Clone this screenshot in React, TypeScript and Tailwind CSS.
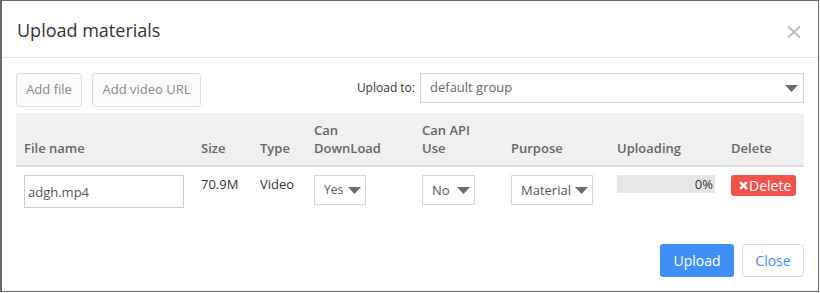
import React from "react";

const Arrow = () => (
  <svg width="13" height="7" viewBox="0 0 13 7" className="shrink-0">
    <polygon points="0,0 13,0 6.5,7" fill="#6b6b6b" />
  </svg>
);

const Sel = ({ label, w, size = "text-[13px]" }: { label: string; w: string; size?: string }) => (
  <div className={`${w} h-[30px] flex items-center justify-between border border-[#d4d4d4] bg-white pl-[9px] pr-[4px] ${size} text-[#555]`}>
    <span>{label}</span>
    <Arrow />
  </div>
);

export default function App() {
  return (
    <div
      className="w-[819px] h-[292px] flex flex-col border border-l-2 border-[#6a6a6a] bg-white text-[#333]"
      style={{ fontFamily: '"Open Sans", "Liberation Sans", sans-serif' }}
    >
      <div className="h-[57px] shrink-0 flex items-center justify-between border-b border-[#e5e5e5] pl-[15px] pr-[17px]">
        <div className="text-[18px] leading-[24px] text-[#333] pt-[2px]">Upload materials</div>
        <svg width="14" height="12" viewBox="0 0 14 12" className="mt-[6px]">
          <path d="M1 0.5 L13 11.5 M13 0.5 L1 11.5" stroke="#bdbdbd" strokeWidth="2" />
        </svg>
      </div>

      <div className="pl-[14px] pr-[14px] pt-[15px]">
        <div className="flex items-start justify-between">
          <div className="flex gap-[10px]">
            <button className="h-[34px] w-[66px] rounded-[3px] border border-[#dcdcdc] bg-[#fafafa] text-[13px] text-[#8a8a8a]">
              Add file
            </button>
            <button className="h-[34px] w-[109px] rounded-[3px] border border-[#dcdcdc] bg-[#fafafa] text-[13px] text-[#8a8a8a]">
              Add video URL
            </button>
          </div>
          <div className="flex items-center gap-[5px]">
            <span className="text-[12px] text-[#333]">Upload to:</span>
            <div className="w-[384px] h-[30px] flex items-center justify-between border border-[#d4d4d4] bg-white pl-[9px] pr-[5px] text-[13px] text-[#666]">
              <span>default group</span>
              <Arrow />
            </div>
          </div>
        </div>

        <table className="mt-[6px] w-[788px] table-fixed border-collapse text-[13px] leading-[18px]">
          <colgroup>
            <col className="w-[177px]" />
            <col className="w-[59px]" />
            <col className="w-[54px]" />
            <col className="w-[108px]" />
            <col className="w-[89px]" />
            <col className="w-[106px]" />
            <col className="w-[114px]" />
            <col className="w-[81px]" />
          </colgroup>
          <thead>
            <tr className="bg-[#f0f0f0] border-b-2 border-[#dddddd] text-left text-[#666]">
              <th className="h-[53px] pl-[8px] pb-[8px] align-bottom font-semibold">File name</th>
              <th className="pl-[8px] pb-[8px] align-bottom font-semibold">Size</th>
              <th className="pl-[8px] pb-[8px] align-bottom font-semibold">Type</th>
              <th className="pl-[8px] pb-[8px] align-bottom font-semibold">Can<br />DownLoad</th>
              <th className="pl-[8px] pb-[8px] align-bottom font-semibold">Can API<br />Use</th>
              <th className="pl-[8px] pb-[8px] align-bottom font-semibold">Purpose</th>
              <th className="pl-[8px] pb-[8px] align-bottom font-semibold">Uploading</th>
              <th className="pl-[8px] pb-[8px] align-bottom font-semibold">Delete</th>
            </tr>
          </thead>
          <tbody>
            <tr className="text-[#333]">
              <td className="pl-[8px] pt-[8px] pb-[8px] align-top">
                <div className="w-[160px] h-[33px] flex items-center border border-[#cfcfcf] pl-[3px] text-[13px] text-[#555]">
                  adgh.mp4
                </div>
              </td>
              <td className="pl-[8px] pt-[8px] align-top">70.9M</td>
              <td className="pl-[8px] pt-[8px] align-top">Video</td>
              <td className="pl-[8px] pt-[8px] align-top">
                <Sel label="Yes" w="w-[52px]" size="text-[12px]" />
              </td>
              <td className="pl-[8px] pt-[8px] align-top">
                <Sel label="No" w="w-[53px]" />
              </td>
              <td className="pl-[8px] pt-[8px] align-top">
                <Sel label="Material" w="w-[82px]" />
              </td>
              <td className="pl-[8px] pt-[8px] align-top">
                <div className="w-[98px] h-[18px] bg-[#e6e6e6] text-right pr-[2px] text-[13px] leading-[18px] text-[#333]">0%</div>
              </td>
              <td className="pl-[8px] pt-[8px] align-top">
                <button className="w-[65px] h-[21px] rounded-[3px] bg-[#f2524a] text-white text-[14px] leading-[21px] flex items-center pl-[8px]">
                  <svg width="9" height="9" viewBox="0 0 9 9" className="mr-[1px]">
                    <path d="M1.2 1.2 L7.8 7.8 M7.8 1.2 L1.2 7.8" stroke="#fff" strokeWidth="2.6" />
                  </svg>
                  Delete
                </button>
              </td>
            </tr>
          </tbody>
        </table>
      </div>

      <div className="mt-auto flex justify-end gap-[8px] pr-[14px] pb-[14px]">
        <button className="w-[74px] h-[33px] rounded-[3px] bg-[#3f8ff8] text-white text-[14px]">Upload</button>
        <button className="w-[62px] h-[33px] rounded-[3px] border border-[#c6dcfd] bg-white text-[#3f8ff8] text-[14px]">Close</button>
      </div>
    </div>
  );
}
